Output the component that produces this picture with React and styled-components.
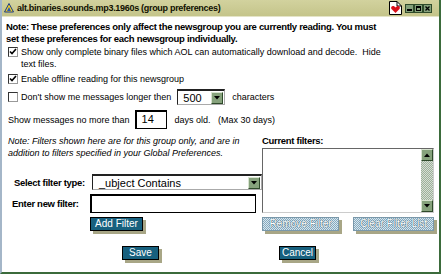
import React from 'react'
import styled, { createGlobalStyle } from 'styled-components'

const GlobalStyle = createGlobalStyle`
  html, body { margin: 0; padding: 0; background: #fff; }
  body { font-family: "Liberation Sans", Arial, sans-serif; color: #000; }
`

const Window = styled.div`
  width: 441px;
  height: 274px;
  box-sizing: border-box;
  overflow: hidden;
  display: flex;
  flex-direction: column;
  background: #fff;
  border-left: 2px solid #a4b6c8;
  border-right: 2px solid #3b6b3b;
  border-bottom: 2px solid #3b6b3b;
`

const TitleBar = styled.div`
  height: 16px;
  flex: none;
  display: flex;
  align-items: center;
  gap: 3px;
  padding: 0 7px 0 2px;
  background: linear-gradient(#d2d29e, #c4c48a);
  border-bottom: 1px solid #e4e4c8;
`

const Title = styled.span`
  flex: 1;
  font-size: 9px;
  font-weight: bold;
  letter-spacing: -0.3px;
  color: #101000;
  white-space: nowrap;
`

const WinButtons = styled.div`
  display: flex;
`

const WinButton = styled.div`
  width: 9px;
  height: 9px;
  box-sizing: border-box;
  background: #84a07a;
  border: 1px solid #2e4a2a;
  display: flex;
  align-items: center;
  justify-content: center;
`

const Body = styled.div`
  flex: 1;
  display: flex;
  flex-direction: column;
  padding: 4px 6px 0 4px;
  font-size: 9px;
  white-space: nowrap;
`

const Note = styled.p`
  margin: 0 0 1px;
  font-weight: bold;
  font-size: 9.5px;
  letter-spacing: -0.3px;
  line-height: 12px;
`

const CheckRow = styled.div`
  display: flex;
  align-items: ${p => (p.$top ? 'flex-start' : 'center')};
  gap: 3px;
  padding-left: 2px;
  line-height: 12px;
  margin-bottom: ${p => p.$gap || 0}px;
`

const Box = styled.span`
  flex: none;
  width: 10px;
  height: 10px;
  box-sizing: border-box;
  border: 1px solid #333;
  border-right-color: #999;
  border-bottom-color: #999;
  background: #fff;
  display: flex;
  align-items: center;
  justify-content: center;
  margin-top: ${p => (p.$top ? 1 : 0)}px;
`

const Dropdown = styled.div`
  width: ${p => p.$w}px;
  height: 16px;
  box-sizing: border-box;
  display: flex;
  align-items: center;
  border: 1px solid #222;
  border-top-width: 2px;
  border-right-color: #aaa;
  border-bottom-color: #aaa;
  background: #fff;
  font-size: 11px;
  padding-left: ${p => p.$pl || 5}px;
  margin: 0 ${p => p.$mr ?? 4}px 0 ${p => p.$ml ?? 4}px;
`

const DropText = styled.span`
  flex: 1;
`

const ArrowBtn = styled.span`
  width: 12px;
  height: 12px;
  margin-right: 1px;
  box-sizing: border-box;
  background: #86a27c;
  border: 1px solid #d8e4d0;
  border-right-color: #2e4a2a;
  border-bottom-color: #2e4a2a;
  display: flex;
  align-items: center;
  justify-content: center;
`

const DaysRow = styled.div`
  display: flex;
  align-items: center;
  padding-left: 2px;
  margin-bottom: 6px;
`

const Spacer = styled.span`
  width: ${p => p.$w}px;
  flex: none;
`

const TextBox = styled.div`
  width: ${p => p.$w}px;
  height: 19px;
  box-sizing: border-box;
  border: 1px solid #000;
  border-top-width: 2px;
  border-left-width: 2px;
  background: #fff;
  font-size: 11px;
  line-height: 14px;
  padding: 0 5px;
`

const FilterArea = styled.div`
  display: grid;
  grid-template-columns: 256px 173px;
`

const Column = styled.div`
  display: flex;
  flex-direction: column;
`

const Italic = styled.p`
  margin: 0 0 15px 2px;
  font-style: italic;
  font-size: 9px;
  line-height: 12px;
`

const FieldRow = styled.div`
  display: flex;
  align-items: center;
  margin-bottom: 4px;
`

const Label = styled.span`
  width: ${p => p.$w}px;
  padding-left: ${p => p.$pl || 0}px;
  box-sizing: border-box;
  font-weight: bold;
  font-size: 9.5px;
  letter-spacing: -0.3px;
`

const ListLabel = styled.span`
  font-weight: bold;
  font-size: 9.5px;
  letter-spacing: -0.3px;
  line-height: 12px;
  margin-bottom: 1px;
`

const ListBox = styled.div`
  height: 65px;
  width: 172px;
  box-sizing: border-box;
  display: flex;
  border: 1px solid #666;
  border-right-color: #ccc;
  border-bottom-color: #ccc;
  background: #fff;
`

const ListArea = styled.div`
  flex: 1;
`

const ScrollBar = styled.div`
  width: 12px;
  display: flex;
  flex-direction: column;
  justify-content: space-between;
  background: repeating-conic-gradient(#9db09a 0 25%, #d6ded4 0 50%) 0 0 / 2px 2px;
`

const ButtonRow = styled.div`
  display: flex;
  gap: ${p => p.$gap || 0}px;
  padding-left: ${p => p.$pl || 0}px;
  margin-top: ${p => p.$mt || 0}px;
`

const Button = styled.button`
  height: 14px;
  width: ${p => p.$w}px;
  padding: 0;
  font-family: "Liberation Sans", Arial, sans-serif;
  font-size: 10px;
  color: #fff;
  border: 1px solid ${p => (p.$disabled ? '#7a98aa' : '#000')};
  background: ${p =>
    p.$disabled
      ? 'repeating-conic-gradient(#86aabf 0 25%, #d8e6ee 0 50%) 0 0 / 2px 2px'
      : '#17607e'};
  box-shadow: 3px 3px 0 #a8a686;
  text-shadow: ${p => (p.$disabled ? '0 0 1px #3e6478, 0 0 1px #3e6478' : 'none')};
  line-height: 12px;
`

const Footer = styled.div`
  display: flex;
  gap: 120px;
  padding-left: 116px;
  margin-top: 15px;
`

const Check = () => (
  <svg width="8" height="8" viewBox="0 0 8 8">
    <path d="M1 3.5 L3 5.5 L7 1" fill="none" stroke="#000" strokeWidth="1.6" />
  </svg>
)

const Down = () => (
  <svg width="6" height="4" viewBox="0 0 6 4">
    <path d="M0 0 H6 L3 3.5 Z" fill="#000" />
  </svg>
)

const Up = () => (
  <svg width="6" height="4" viewBox="0 0 6 4">
    <path d="M0 4 H6 L3 0.5 Z" fill="#000" />
  </svg>
)

const AolIcon = () => (
  <svg width="10" height="10" viewBox="0 0 10 10">
    <path d="M5 0.5 L9.5 9 H0.5 Z" fill="#f2d020" stroke="#1a3a8a" strokeWidth="1" />
    <path d="M5 4 L7 8 H3 Z" fill="#2a5ab8" />
  </svg>
)

const HeartDoc = () => (
  <svg width="13" height="14" viewBox="0 0 13 14">
    <path d="M0.5 0.5 H8 L12.5 5 V13.5 H0.5 Z" fill="#fff" stroke="#000" />
    <path d="M8 0.5 V5 H12.5" fill="none" stroke="#000" />
    <path d="M6.5 12 L2.5 8 C1.5 6.5 2.5 5 4 5 C5 5 6 5.6 6.5 6.5 C7 5.6 8 5 9 5 C10.5 5 11.5 6.5 10.5 8 Z" fill="#d8101a" />
  </svg>
)

const Scroll = () => (
  <ScrollBar>
    <ArrowBtn><Up /></ArrowBtn>
    <ArrowBtn><Down /></ArrowBtn>
  </ScrollBar>
)

export default function App() {
  return (
    <>
      <GlobalStyle />
      <Window>
        <TitleBar>
          <AolIcon />
          <Title>alt.binaries.sounds.mp3.1960s (group preferences)</Title>
          <HeartDoc />
          <WinButtons>
            <WinButton>
              <svg width="5" height="5"><rect x="0" y="3" width="5" height="2" fill="#000" /></svg>
            </WinButton>
            <WinButton>
              <svg width="5" height="5"><rect x="0.5" y="0.5" width="4" height="4" fill="none" stroke="#000" /><rect x="0" y="0" width="5" height="2" fill="#000" /></svg>
            </WinButton>
            <WinButton>
              <svg width="5" height="5"><path d="M0.5 0.5 L4.5 4.5 M4.5 0.5 L0.5 4.5" stroke="#000" strokeWidth="1.3" /></svg>
            </WinButton>
          </WinButtons>
        </TitleBar>

        <Body>
          <Note>
            Note: These preferences only affect the newsgroup you are currently reading. You must
            <br />
            set these preferences for each newsgroup individually.
          </Note>

          <CheckRow $top $gap={3}>
            <Box $top><Check /></Box>
            <span>
              Show only complete binary files which AOL can automatically download and decode.&nbsp;&nbsp;Hide
              <br />
              text files.
            </span>
          </CheckRow>

          <CheckRow $gap={4}>
            <Box><Check /></Box>
            <span>Enable offline reading for this newsgroup</span>
          </CheckRow>

          <CheckRow $gap={5}>
            <Box />
            <span>Don't show me messages longer then</span>
            <Dropdown $w={48} $ml={3}>
              <DropText>500</DropText>
              <ArrowBtn><Down /></ArrowBtn>
            </Dropdown>
            <span>characters</span>
          </CheckRow>

          <DaysRow>
            <span>Show messages no more than</span>
            <Spacer $w={5} />
            <TextBox $w={32}>14</TextBox>
            <Spacer $w={8} />
            <span>days old.&nbsp;&nbsp;&nbsp;(Max 30 days)</span>
          </DaysRow>

          <FilterArea>
            <Column>
              <Italic>
                Note: Filters shown here are for this group only, and are in
                <br />
                addition to filters specified in your Global Preferences.
              </Italic>
              <FieldRow>
                <Label $w={86} $pl={8}>Select filter type:</Label>
                <Dropdown $w={170} $pl={6} $ml={0} $mr={0}>
                  <DropText>_ubject Contains</DropText>
                  <ArrowBtn><Down /></ArrowBtn>
                </Dropdown>
              </FieldRow>
              <FieldRow>
                <Label $w={84} $pl={6}>Enter new filter:</Label>
                <TextBox $w={166} />
              </FieldRow>
              <ButtonRow $pl={84}>
                <Button $w={53}>Add Filter</Button>
              </ButtonRow>
            </Column>

            <Column>
              <ListLabel>Current filters:</ListLabel>
              <ListBox>
                <ListArea />
                <Scroll />
              </ListBox>
              <ButtonRow $gap={14} $mt={4}>
                <Button $w={77} $disabled>Remove Filter</Button>
                <Button $w={81} $disabled>Clear Filter List</Button>
              </ButtonRow>
            </Column>
          </FilterArea>

          <Footer>
            <Button $w={37}>Save</Button>
            <Button $w={37}>Cancel</Button>
          </Footer>
        </Body>
      </Window>
    </>
  )
}
